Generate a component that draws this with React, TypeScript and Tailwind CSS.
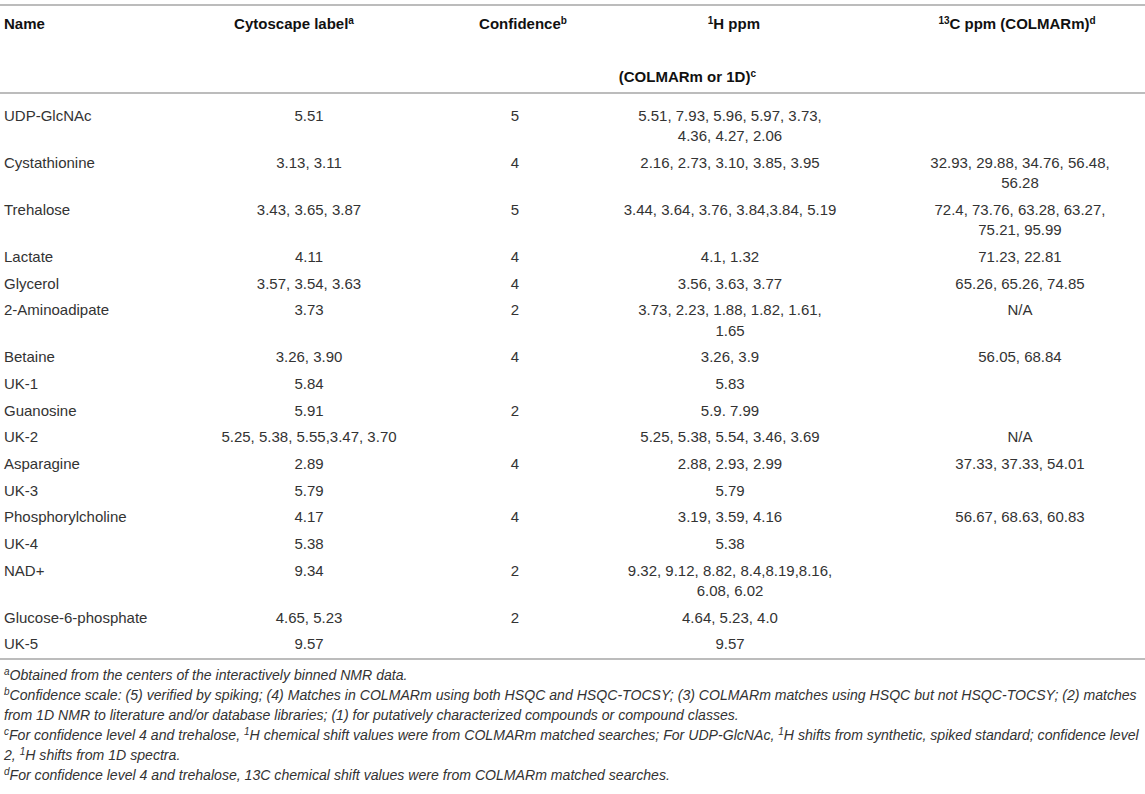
type Row = {
  name: string;
  label: string;
  conf: string;
  h: string[];
  c: string[];
};

const rows: Row[] = [
  { name: "UDP-GlcNAc", label: "5.51", conf: "5", h: ["5.51, 7.93, 5.96, 5.97, 3.73,", "4.36, 4.27, 2.06"], c: [] },
  { name: "Cystathionine", label: "3.13, 3.11", conf: "4", h: ["2.16, 2.73, 3.10, 3.85, 3.95"], c: ["32.93, 29.88, 34.76, 56.48,", "56.28"] },
  { name: "Trehalose", label: "3.43, 3.65, 3.87", conf: "5", h: ["3.44, 3.64, 3.76, 3.84,3.84, 5.19"], c: ["72.4, 73.76, 63.28, 63.27,", "75.21, 95.99"] },
  { name: "Lactate", label: "4.11", conf: "4", h: ["4.1, 1.32"], c: ["71.23, 22.81"] },
  { name: "Glycerol", label: "3.57, 3.54, 3.63", conf: "4", h: ["3.56, 3.63, 3.77"], c: ["65.26, 65.26, 74.85"] },
  { name: "2-Aminoadipate", label: "3.73", conf: "2", h: ["3.73, 2.23, 1.88, 1.82, 1.61,", "1.65"], c: ["N/A"] },
  { name: "Betaine", label: "3.26, 3.90", conf: "4", h: ["3.26, 3.9"], c: ["56.05, 68.84"] },
  { name: "UK-1", label: "5.84", conf: "", h: ["5.83"], c: [] },
  { name: "Guanosine", label: "5.91", conf: "2", h: ["5.9. 7.99"], c: [] },
  { name: "UK-2", label: "5.25, 5.38, 5.55,3.47, 3.70", conf: "", h: ["5.25, 5.38, 5.54, 3.46, 3.69"], c: ["N/A"] },
  { name: "Asparagine", label: "2.89", conf: "4", h: ["2.88, 2.93, 2.99"], c: ["37.33, 37.33, 54.01"] },
  { name: "UK-3", label: "5.79", conf: "", h: ["5.79"], c: [] },
  { name: "Phosphorylcholine", label: "4.17", conf: "4", h: ["3.19, 3.59, 4.16"], c: ["56.67, 68.63, 60.83"] },
  { name: "UK-4", label: "5.38", conf: "", h: ["5.38"], c: [] },
  { name: "NAD+", label: "9.34", conf: "2", h: ["9.32, 9.12, 8.82, 8.4,8.19,8.16,", "6.08, 6.02"], c: [] },
  { name: "Glucose-6-phosphate", label: "4.65, 5.23", conf: "2", h: ["4.64, 5.23, 4.0"], c: [] },
  { name: "UK-5", label: "9.57", conf: "", h: ["9.57"], c: [] },
];

const cols = "grid grid-cols-[200px_218px_194px_236px_1fr]";

const Lines = ({ items }: { items: string[] }) => (
  <>
    {items.map((t, i) => (
      <div key={i} className="whitespace-nowrap">
        {t}
      </div>
    ))}
  </>
);

const Sup = ({ children }: { children: React.ReactNode }) => (
  <sup className="text-[10px]">{children}</sup>
);

export default function App() {
  return (
    <div className="w-[1145px] h-[794px] bg-white pt-[4px] text-[#333] font-['Liberation_Sans',Arial,sans-serif] text-[15px] overflow-hidden">
      {/* header */}
      <div className={`${cols} border-t-2 border-b-2 border-[#bcbcbc] h-[90px] pt-[8px] pb-[5px] leading-[20.3px] font-bold text-[#111]`}>
        <div className="pl-[4px]">Name</div>
        <div className="text-center pr-[30px] whitespace-nowrap">
          Cytoscape label<Sup>a</Sup>
        </div>
        <div className="text-center pl-[16px]">
          Confidence<Sup>b</Sup>
        </div>
        <div className="flex flex-col justify-between items-end pr-[88px] whitespace-nowrap">
          <div>
            <Sup>1</Sup>H ppm
          </div>
          <div className="mr-[4px]">
            (COLMARm or 1D)<Sup>c</Sup>
          </div>
        </div>
        <div className="text-center pl-[41px] whitespace-nowrap">
          <Sup>13</Sup>C ppm (COLMARm)<Sup>d</Sup>
        </div>
      </div>

      {/* body */}
      <div className="pt-[9px] border-b-2 border-[#bcbcbc] leading-[20.3px]">
        {rows.map((r) => (
          <div key={r.name} className={`${cols} py-[3.2px]`}>
            <div className="pl-[4px] whitespace-nowrap">{r.name}</div>
            <div className="text-center whitespace-nowrap">{r.label}</div>
            <div className="text-center">{r.conf}</div>
            <div className="text-center">
              <Lines items={r.h} />
            </div>
            <div className="text-center pl-[47px]">
              <Lines items={r.c} />
            </div>
          </div>
        ))}
      </div>

      {/* footnotes */}
      <div className="pt-[5px] pl-[4px] italic text-[14.1px] leading-[20px] text-[#333]">
        <p className="whitespace-nowrap">
          <Sup>a</Sup>Obtained from the centers of the interactively binned NMR data.
        </p>
        <p className="whitespace-nowrap">
          <Sup>b</Sup>Confidence scale: (5) verified by spiking; (4) Matches in COLMARm using both HSQC and HSQC-TOCSY; (3) COLMARm matches using HSQC but not HSQC-TOCSY; (2) matches
          <br />
          from 1D NMR to literature and/or database libraries; (1) for putatively characterized compounds or compound classes.
        </p>
        <p className="whitespace-nowrap">
          <Sup>c</Sup>For confidence level 4 and trehalose, <Sup>1</Sup>H chemical shift values were from COLMARm matched searches; For UDP-GlcNAc, <Sup>1</Sup>H shifts from synthetic, spiked standard; confidence level
          <br />
          2, <Sup>1</Sup>H shifts from 1D spectra.
        </p>
        <p className="whitespace-nowrap">
          <Sup>d</Sup>For confidence level 4 and trehalose, 13C chemical shift values were from COLMARm matched searches.
        </p>
      </div>
    </div>
  );
}
